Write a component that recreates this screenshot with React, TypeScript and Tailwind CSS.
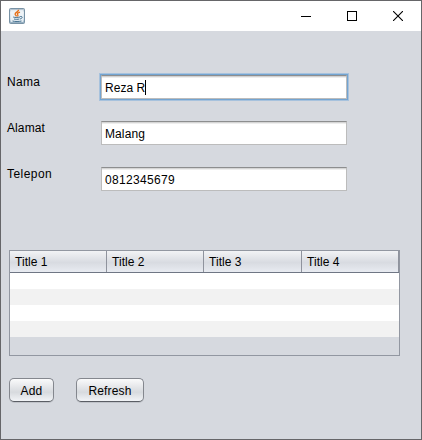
import React from 'react';

function JavaIcon() {
  return (
    <svg className="ml-2 h-4 w-4" viewBox="0 0 16 16" fill="none">
      <defs>
        <linearGradient id="tile" x1="0" y1="0" x2="0" y2="1">
          <stop offset="0" stopColor="#a3b5c3" />
          <stop offset="0.25" stopColor="#e8eef3" />
          <stop offset="0.75" stopColor="#d2e0ea" />
          <stop offset="1" stopColor="#7f9db3" />
        </linearGradient>
      </defs>
      <rect x="0.5" y="0.5" width="15" height="15" rx="1" fill="url(#tile)" stroke="#7892a5" />
      <rect x="2" y="2" width="12" height="12" fill="#f2f6f9" fillOpacity="0.7" />
      <path d="M9.6 1.8C9.8 4 5.9 4.3 6.1 6.2C6.2 7.1 7.3 7.4 7.5 8.3M11 4.1C8.5 4.8 7.8 5.6 8.8 6.8C9.2 7.4 8.8 8 8.3 8.3" stroke="#e66f17" strokeWidth="1.3" />
      <path d="M4.2 9C5 9.6 9 9.6 11 9M11.2 8.5C14.3 8 13.5 10.7 10.8 11M5 11C6.5 11.5 9 11.4 10.2 11M3.5 13C5.5 13.7 10.7 13.6 12.5 13" stroke="#44708f" strokeWidth="1" />
    </svg>
  );
}

function TitleBar() {
  return (
    <header className="flex h-[30px] items-center justify-between bg-white">
      <JavaIcon />
      <div className="flex h-full">
        <button aria-label="Minimize" className="flex w-[45px] items-center justify-center">
          <svg width="11" height="11" shapeRendering="crispEdges"><path d="M0 5.5H10" stroke="#000" /></svg>
        </button>
        <button aria-label="Maximize" className="flex w-[46px] items-center justify-center">
          <svg width="10" height="10" shapeRendering="crispEdges"><rect x="0.5" y="0.5" width="9" height="9" fill="none" stroke="#000" /></svg>
        </button>
        <button aria-label="Close" className="flex w-[46px] items-center justify-center">
          <svg width="10" height="10"><path d="M0 0L10 10M10 0L0 10" stroke="#000" strokeWidth="1.1" /></svg>
        </button>
      </div>
    </header>
  );
}

interface FieldProps {
  label: string;
  value: string;
  focused?: boolean;
  spacing: string;
  labelSpacing: string;
}

function Field({ label, value, focused, spacing, labelSpacing }: FieldProps) {
  return (
    <div className="flex h-6">
      <span className={`w-[94px] leading-[14px] ${labelSpacing}`}>{label}</span>
      <div
        className={`flex h-6 w-[246px] items-center border border-[#bcbcbc] border-t-[#8d8e8f] bg-white pt-px pl-[3px] ${
          focused
            ? 'shadow-[0_0_0_1px_#73a4d1,0_0_0_2px_#a7c2dd,inset_0_1px_0_#d2d2d2,inset_0_2px_0_#eeeeee]'
            : 'shadow-[inset_0_1px_0_#d5d5d5,inset_0_2px_0_#eeeeee]'
        }`}
      >
        <span className={spacing}>{value}</span>
        {focused && <span className="h-[15px] w-px bg-black" />}
      </div>
    </div>
  );
}

function HeaderCell({ title, width }: { title: string; width: string }) {
  return (
    <div className={`flex h-[21px] items-center border-r border-[#8f939d] pl-[5px] tracking-[0.05px] ${width}`}>
      {title}
    </div>
  );
}

function Table() {
  return (
    <div className="h-[106px] w-[391px] border border-[#9297a1] bg-[#d6d9df]">
      <div className="flex h-[22px] border-b border-[#6f7684] bg-linear-to-b from-[#f2f3f5] via-[#d8dbe1] via-55% to-[#e8ebf1]">
        <HeaderCell title="Title 1" width="w-[97px]" />
        <HeaderCell title="Title 2" width="w-[97px]" />
        <HeaderCell title="Title 3" width="w-[98px]" />
        <HeaderCell title="Title 4" width="w-[97px]" />
      </div>
      <div className="h-4 bg-white" />
      <div className="h-4 bg-[#f2f2f2]" />
      <div className="h-4 bg-white" />
      <div className="h-4 bg-[#f2f2f2]" />
    </div>
  );
}

function Button({ children, width }: { children: string; width: string }) {
  return (
    <button
      className={`h-6 rounded-[5px] border border-[#84878e] border-b-[#5b5e65] bg-linear-to-b from-[#fafafb] via-[#d7dade] via-60% to-[#f2f4f7] pt-0.5 text-center leading-none tracking-[0.15px] shadow-[0_1px_0_#c0c3c9] ${width}`}
    >
      {children}
    </button>
  );
}

export default function App() {
  return (
    <div className="h-[440px] w-[422px] border border-[#666669] bg-[#d6d9df] font-['Liberation_Sans',Arial,sans-serif] text-[12px] text-black">
      <TitleBar />
      <main>
        <div className="flex flex-col gap-[22px] pt-11 pl-1.5">
          <Field label="Nama" value="Reza R" focused labelSpacing="tracking-[0.33px]" spacing="tracking-[0.05px]" />
          <Field label="Alamat" value="Malang" labelSpacing="tracking-[0.1px]" spacing="tracking-[0.1px]" />
          <Field label="Telepon" value="0812345679" labelSpacing="tracking-[0.45px]" spacing="tracking-[0.33px]" />
        </div>
        <div className="mt-[59px] pl-2">
          <Table />
        </div>
        <div className="mt-[22px] flex gap-[22px] pl-2">
          <Button width="w-[45px]">Add</Button>
          <Button width="w-[68px]">Refresh</Button>
        </div>
      </main>
    </div>
  );
}
